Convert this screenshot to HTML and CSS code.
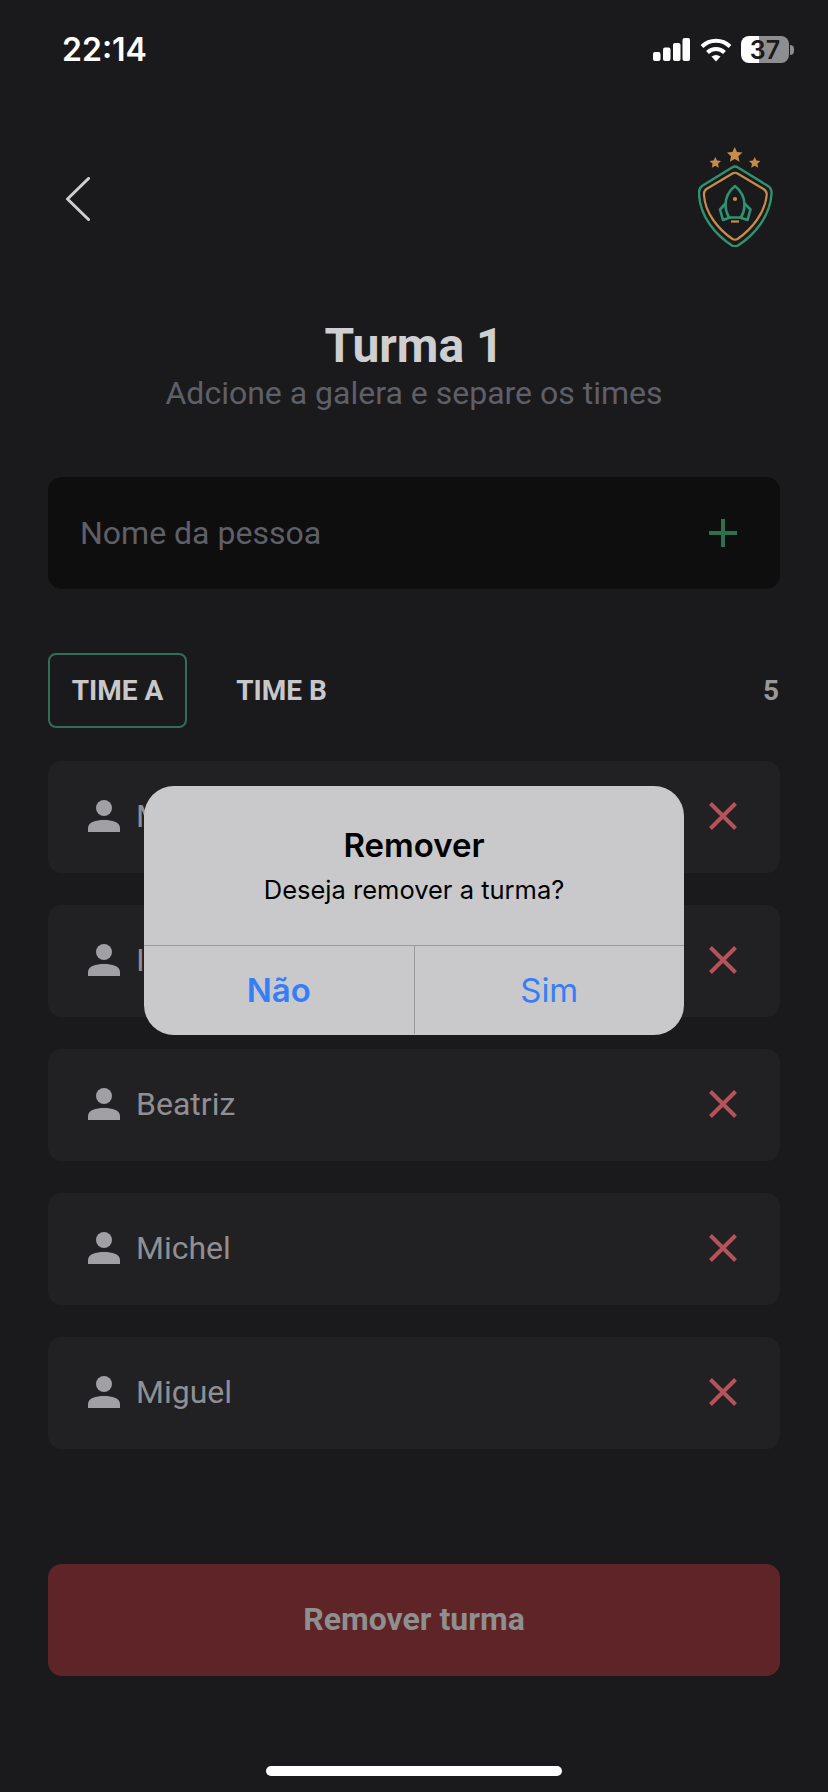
FILE: index.html
```html
<!DOCTYPE html>
<html lang="pt-BR">
<head>
  <meta charset="UTF-8" />
  <title>Turma 1</title>
  <link rel="stylesheet" href="styles.css">
</head>
<body>
  <div class="status">
    <span class="clock">22:14</span>
    <div class="status-icons">
      <svg width="37" height="23" viewBox="0 0 37 23" fill="#fff">
        <rect x="0" y="14" width="7.5" height="9" rx="2"/>
        <rect x="10" y="9.5" width="7.5" height="13.5" rx="2"/>
        <rect x="20" y="5" width="7.5" height="18" rx="2"/>
        <rect x="29.5" y="0" width="7.5" height="23" rx="2"/>
      </svg>
      <svg class="wifi" width="32" height="25" viewBox="0 0 32 25" fill="none" stroke="#fff" stroke-width="4">
        <path d="M2 9.5 A20 20 0 0 1 30 9.5"/>
        <path d="M7.5 15.5 A12 12 0 0 1 24.5 15.5"/>
        <path d="M11.5 19.5 Q16 16.5 20.5 19.5 L16 24.5 Z" fill="#fff" stroke="none"/>
      </svg>
      <div class="battery"><span>37</span></div>
      <div class="battery-nub"></div>
    </div>
  </div>

  <div class="topbar">
    <svg class="back" width="24" height="44" viewBox="0 0 24 44" fill="none" stroke="#cfcfcf" stroke-width="3" stroke-linecap="round" stroke-linejoin="round">
      <path d="M22.5 1.5 L1.5 22 L22.5 42.5"/>
    </svg>
    <svg width="75" height="100" viewBox="0 0 75 100" fill="none">
      <g fill="#c58c4a">
        <path d="M36.7 0 L39 5 L44.5 5.6 L40.4 9.3 L41.5 14.7 L36.7 12 L31.9 14.7 L33 9.3 L28.9 5.6 L34.4 5 Z"/>
        <path d="M17.3 10 L19 13.6 L23 14.1 L20 16.8 L20.8 20.8 L17.3 18.8 L13.8 20.8 L14.6 16.8 L11.6 14.1 L15.6 13.6 Z"/>
        <path d="M56.7 10 L58.4 13.6 L62.4 14.1 L59.4 16.8 L60.2 20.8 L56.7 18.8 L53.2 20.8 L54 16.8 L51 14.1 L55 13.6 Z"/>
      </g>
      <path d="M34 20.5 Q37 18.5 40 20.5 L70 39 Q74 41.5 73.5 47 C72 70 56 88 40 98.5 Q37 100 34 98.5 C18 88 2 70 1 47 Q0.5 41.5 4 39 Z" stroke="#2f9270" stroke-width="2.4"/>
      <path d="M34.5 26.5 Q37 25 39.5 26.5 L65.5 42 Q69 44 68.7 48 C67 66 54 82 39.5 92 Q37 93.3 34.5 92 C20 82 7 66 6 48 Q5.7 44 8.5 42 Z" stroke="#c58c4a" stroke-width="2.2"/>
      <path d="M37 39 C32 43 27.5 50 27.5 58 C27.5 63 29 67 31 70.5 H43 C45 67 46.5 63 46.5 58 C46.5 50 42 43 37 39 Z" stroke="#2f9270" stroke-width="2.6" stroke-linejoin="round"/>
      <path d="M28 56 L22 62.5 L25 73 L32 70.5 M46 56 L52.5 62.5 L49.5 73 L42 70.5" stroke="#2f9270" stroke-width="2.6" stroke-linejoin="round"/>
      <circle cx="37" cy="52" r="2.1" fill="#c58c4a"/>
      <path d="M33 74.5 H41" stroke="#c58c4a" stroke-width="2.2"/>
    </svg>
  </div>

  <div class="heading">
    <h1>Turma 1</h1>
    <p>Adcione a galera e separe os times</p>
  </div>

  <div class="content">
    <div class="add-box">
      <span>Nome da pessoa</span>
      <svg width="28" height="28" viewBox="0 0 28 28" stroke="#2f6f50" stroke-width="4"><path d="M14 0 V28 M0 14 H28"/></svg>
    </div>

    <div class="tabs">
      <div class="tab tab-active">TIME A</div>
      <div class="tab">TIME B</div>
      <span class="count">5</span>
    </div>

    <div class="players">
      <div class="player">
        <svg class="person" width="32" height="32" viewBox="0 0 32 32" fill="#a0a0a5"><circle cx="16" cy="8" r="8"/><path d="M0 32 V28 C0 22 8 20 16 20 C24 20 32 22 32 28 V32 Z"/></svg>
        <span class="name">Mateus</span>
        <svg class="remove" width="28" height="28" viewBox="0 0 28 28" stroke="#b5525a" stroke-width="4"><path d="M1.5 1.5 L26.5 26.5 M26.5 1.5 L1.5 26.5"/></svg>
      </div>
      <div class="player">
        <svg class="person" width="32" height="32" viewBox="0 0 32 32" fill="#a0a0a5"><circle cx="16" cy="8" r="8"/><path d="M0 32 V28 C0 22 8 20 16 20 C24 20 32 22 32 28 V32 Z"/></svg>
        <span class="name">Igor</span>
        <svg class="remove" width="28" height="28" viewBox="0 0 28 28" stroke="#b5525a" stroke-width="4"><path d="M1.5 1.5 L26.5 26.5 M26.5 1.5 L1.5 26.5"/></svg>
      </div>
      <div class="player">
        <svg class="person" width="32" height="32" viewBox="0 0 32 32" fill="#a0a0a5"><circle cx="16" cy="8" r="8"/><path d="M0 32 V28 C0 22 8 20 16 20 C24 20 32 22 32 28 V32 Z"/></svg>
        <span class="name">Beatriz</span>
        <svg class="remove" width="28" height="28" viewBox="0 0 28 28" stroke="#b5525a" stroke-width="4"><path d="M1.5 1.5 L26.5 26.5 M26.5 1.5 L1.5 26.5"/></svg>
      </div>
      <div class="player">
        <svg class="person" width="32" height="32" viewBox="0 0 32 32" fill="#a0a0a5"><circle cx="16" cy="8" r="8"/><path d="M0 32 V28 C0 22 8 20 16 20 C24 20 32 22 32 28 V32 Z"/></svg>
        <span class="name">Michel</span>
        <svg class="remove" width="28" height="28" viewBox="0 0 28 28" stroke="#b5525a" stroke-width="4"><path d="M1.5 1.5 L26.5 26.5 M26.5 1.5 L1.5 26.5"/></svg>
      </div>
      <div class="player">
        <svg class="person" width="32" height="32" viewBox="0 0 32 32" fill="#a0a0a5"><circle cx="16" cy="8" r="8"/><path d="M0 32 V28 C0 22 8 20 16 20 C24 20 32 22 32 28 V32 Z"/></svg>
        <span class="name">Miguel</span>
        <svg class="remove" width="28" height="28" viewBox="0 0 28 28" stroke="#b5525a" stroke-width="4"><path d="M1.5 1.5 L26.5 26.5 M26.5 1.5 L1.5 26.5"/></svg>
      </div>
    </div>

    <div class="remove-btn">Remover turma</div>
  </div>

  <div class="home-bar"></div>

  <div class="alert">
    <div class="alert-body">
      <div class="alert-title">Remover</div>
      <div class="alert-msg">Deseja remover a turma?</div>
    </div>
    <div class="alert-actions">
      <div class="alert-btn alert-btn-bold">Não</div>
      <div class="alert-btn">Sim</div>
    </div>
  </div>
</body>
</html>
```

FILE: styles.css
```css
* {
  box-sizing: border-box;
}
body {
  position: relative;
  width: 828px;
  height: 1792px;
  margin: 0;
  overflow: hidden;
  background: #1a1a1c;
  font-family: Roboto, Arial, sans-serif;
}

.status {
  display: flex;
  justify-content: space-between;
  align-items: center;
  height: 27px;
  margin-top: 36px;
  padding: 0 34px 0 62px;
}
.clock {
  font-family: Inter, sans-serif;
  font-size: 32px;
  font-weight: 600;
  color: #fff;
}
.status-icons {
  display: flex;
  align-items: center;
}
.wifi {
  margin-left: 10px;
}
.battery {
  display: flex;
  align-items: center;
  justify-content: center;
  width: 48px;
  height: 27px;
  margin-left: 9px;
  border-radius: 8px;
  background: linear-gradient(to right, #fff 37%, #8e8e90 37%);
  font-family: Inter, sans-serif;
  font-size: 25px;
  font-weight: 600;
  color: #1a1a1c;
}
.battery-nub {
  width: 4px;
  height: 10px;
  margin-left: 1px;
  border-radius: 0 4px 4px 0;
  background: #8e8e90;
}

.topbar {
  display: flex;
  justify-content: space-between;
  align-items: center;
  height: 100px;
  margin-top: 84px;
  padding: 0 55px 0 66px;
}
.back {
  margin-top: 4px;
}

.heading {
  margin-top: 71px;
  text-align: center;
}
.heading h1 {
  margin: 0;
  font-size: 48px;
  line-height: 56px;
  font-weight: 700;
  color: #cfcfd1;
}
.heading p {
  margin: 0;
  font-size: 32px;
  line-height: 38px;
  color: #5f5f68;
}

.content {
  padding: 0 48px;
}

.add-box {
  display: flex;
  justify-content: space-between;
  align-items: center;
  height: 112px;
  margin-top: 65px;
  padding: 0 43px 0 32px;
  border-radius: 14px;
  background: #0e0e0f;
  font-size: 32px;
  color: #5f5f68;
}

.tabs {
  display: flex;
  align-items: center;
  height: 75px;
  margin-top: 64px;
  font-size: 28px;
  font-weight: 700;
  color: #c8c8ca;
}
.tab {
  display: flex;
  align-items: center;
  justify-content: center;
  width: 139px;
  height: 75px;
  border: 2px solid transparent;
  border-radius: 8px;
}
.tab-active {
  border-color: #2f6f55;
  margin-right: 25px;
}
.count {
  margin-left: auto;
  margin-right: 1px;
  color: #98989b;
}

.players {
  display: flex;
  flex-direction: column;
  gap: 32px;
  margin-top: 33px;
}
.player {
  display: flex;
  align-items: center;
  height: 112px;
  padding: 0 43px 2px 40px;
  border-radius: 14px;
  background: #212123;
}
.name {
  margin-left: 16px;
  font-size: 32px;
  color: #8f8f94;
}
.remove {
  margin-left: auto;
}

.remove-btn {
  display: flex;
  align-items: center;
  justify-content: center;
  height: 112px;
  margin-top: 115px;
  padding-bottom: 2px;
  border-radius: 14px;
  background: #5e2427;
  font-size: 32px;
  font-weight: 700;
  color: #8f8f8f;
}

.home-bar {
  width: 296px;
  height: 10px;
  margin: 90px auto 0;
  border-radius: 5px;
  background: #fff;
}

.alert {
  position: absolute;
  left: 144px;
  top: 786px;
  width: 540px;
  height: 249px;
  border-radius: 30px;
  background: #c9c9cb;
  font-family: Inter, sans-serif;
  color: #000;
  text-align: center;
}
.alert-body {
  height: 160px;
  padding-top: 39px;
  border-bottom: 1px solid #9a9a9c;
}
.alert-title {
  font-size: 33px;
  font-weight: 600;
  line-height: 40px;
}
.alert-msg {
  margin-top: 9px;
  font-size: 25.5px;
  line-height: 32px;
}
.alert-actions {
  display: flex;
  height: 88px;
}
.alert-btn {
  flex: 1;
  display: flex;
  align-items: center;
  justify-content: center;
  font-size: 33px;
  color: #367ef6;
}
.alert-btn + .alert-btn {
  border-left: 1px solid #9a9a9c;
}
.alert-btn-bold {
  font-weight: 600;
}
```
